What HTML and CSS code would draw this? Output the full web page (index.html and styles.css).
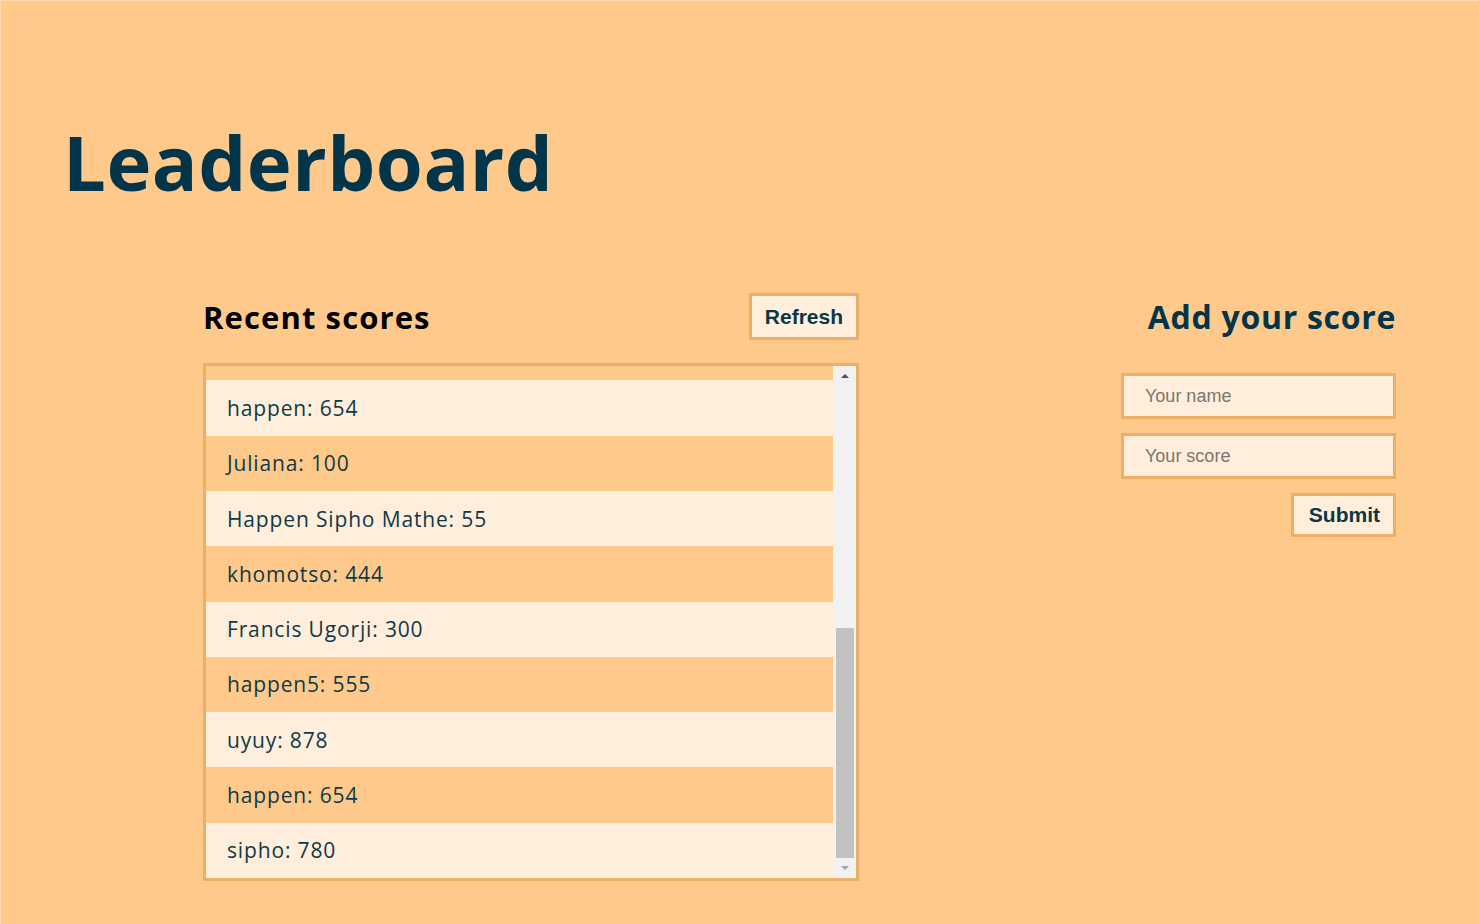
FILE: index.html
```html
<!DOCTYPE html>
<html lang="en">
<head>
<meta charset="utf-8">
<title>Leaderboard</title>
<link rel="stylesheet" href="styles.css">
</head>
<body>
<div class="page">
  <h1 class="title">Leaderboard</h1>
  <main class="main">
    <section class="recent">
      <div class="recent-head">
        <h2 class="recent-title">Recent scores</h2>
        <button class="btn" type="button">Refresh</button>
      </div>
      <div class="list-box">
        <ul class="rows">
          <li class="row">happy: 321</li>
          <li class="row">happen: 654</li>
          <li class="row">Juliana: 100</li>
          <li class="row">Happen Sipho Mathe: 55</li>
          <li class="row">khomotso: 444</li>
          <li class="row">Francis Ugorji: 300</li>
          <li class="row">happen5: 555</li>
          <li class="row">uyuy: 878</li>
          <li class="row">happen: 654</li>
          <li class="row">sipho: 780</li>
        </ul>
        <div class="scrollbar">
          <div class="sb-btn"><span class="arrow-up"></span></div>
          <div class="sb-track"><div class="sb-thumb"></div></div>
          <div class="sb-btn"><span class="arrow-down"></span></div>
        </div>
      </div>
    </section>
    <section class="add">
      <h2 class="add-title">Add your score</h2>
      <form class="form">
        <input class="field" type="text" placeholder="Your name">
        <input class="field" type="text" placeholder="Your score">
        <button class="btn btn-submit" type="button">Submit</button>
      </form>
    </section>
  </main>
</div>
</body>
</html>
```

FILE: styles.css
```css
* { box-sizing: border-box; }

html, body {
  margin: 0;
  padding: 0;
  background: #ffc98b;
}

body {
  font-family: "Open Sans", "Liberation Sans", sans-serif;
  color: #0c3645;
}

.page {
  width: 1479px;
  height: 924px;
  padding: 112px 83px 0 62px;
  border-top: 1px solid #ffd9ad;
  border-left: 1px solid #ffd9ad;
}

.title {
  margin: 0;
  font-size: 76px;
  font-weight: 700;
  line-height: 98px;
  color: #02344a;
  letter-spacing: 0.5px;
}

.main {
  display: flex;
  justify-content: space-between;
  align-items: flex-start;
  margin-top: 82px;
  padding-left: 140px;
}

.recent {
  width: 656px;
}

.recent-head {
  display: flex;
  justify-content: space-between;
  align-items: center;
  height: 47px;
}

.recent-title {
  margin: 0;
  font-size: 31px;
  font-weight: 700;
  letter-spacing: 1.1px;
  color: #000;
}

.btn {
  font-family: "Liberation Sans", Arial, sans-serif;
  font-weight: 700;
  font-size: 21px;
  color: #0c3645;
  background: #ffeedb;
  border: 3px solid #ebaf65;
  padding: 0 13px;
  height: 47px;
  cursor: pointer;
}

.list-box {
  margin-top: 23px;
  height: 518px;
  border: 3px solid #ebaf65;
  display: flex;
}

.rows {
  list-style: none;
  margin: 0;
  padding: 0;
  flex: 1;
  display: flex;
  flex-direction: column;
  justify-content: flex-end;
  overflow: hidden;
}

.row {
  flex-shrink: 0;
  height: 55.3px;
  display: flex;
  align-items: center;
  padding-left: 21px;
  font-size: 21px;
  letter-spacing: 0.85px;
  color: #0e3a48;
}

.row:nth-child(odd) { background: #ffc98b; }
.row:nth-child(even) { background: #ffeedb; }

.scrollbar {
  width: 23px;
  background: #f1f1f1;
  display: flex;
  flex-direction: column;
}

.sb-btn {
  height: 20px;
  display: flex;
  align-items: center;
  justify-content: center;
}

.arrow-up {
  width: 0;
  height: 0;
  border-left: 4px solid transparent;
  border-right: 4px solid transparent;
  border-bottom: 4px solid #505050;
}

.arrow-down {
  width: 0;
  height: 0;
  border-left: 4px solid transparent;
  border-right: 4px solid transparent;
  border-top: 4px solid #a3a3a3;
}

.sb-track {
  flex: 1;
  display: flex;
  flex-direction: column;
  justify-content: flex-end;
  padding: 0 2px 0 3px;
}

.sb-thumb {
  height: 230px;
  background: #c1c1c1;
}

.add {
  width: 275px;
  display: flex;
  flex-direction: column;
  align-items: flex-end;
}

.add-title {
  margin: 0;
  height: 47px;
  display: flex;
  align-items: center;
  font-size: 32px;
  font-weight: 700;
  letter-spacing: 0.7px;
  color: #02344a;
}

.form {
  width: 100%;
  display: flex;
  flex-direction: column;
  align-items: flex-end;
  gap: 14px;
  margin-top: 33px;
}

.field {
  width: 100%;
  height: 46px;
  border: 3px solid #ebaf65;
  background: #ffeedb;
  padding: 0 21px;
  font-family: "Liberation Sans", Arial, sans-serif;
  font-size: 18px;
  color: #0c3645;
  outline: none;
}

.field::placeholder {
  color: #7a7670;
}

.btn-submit {
  height: 44px;
  padding: 0 13px 0 15px;
}
```
